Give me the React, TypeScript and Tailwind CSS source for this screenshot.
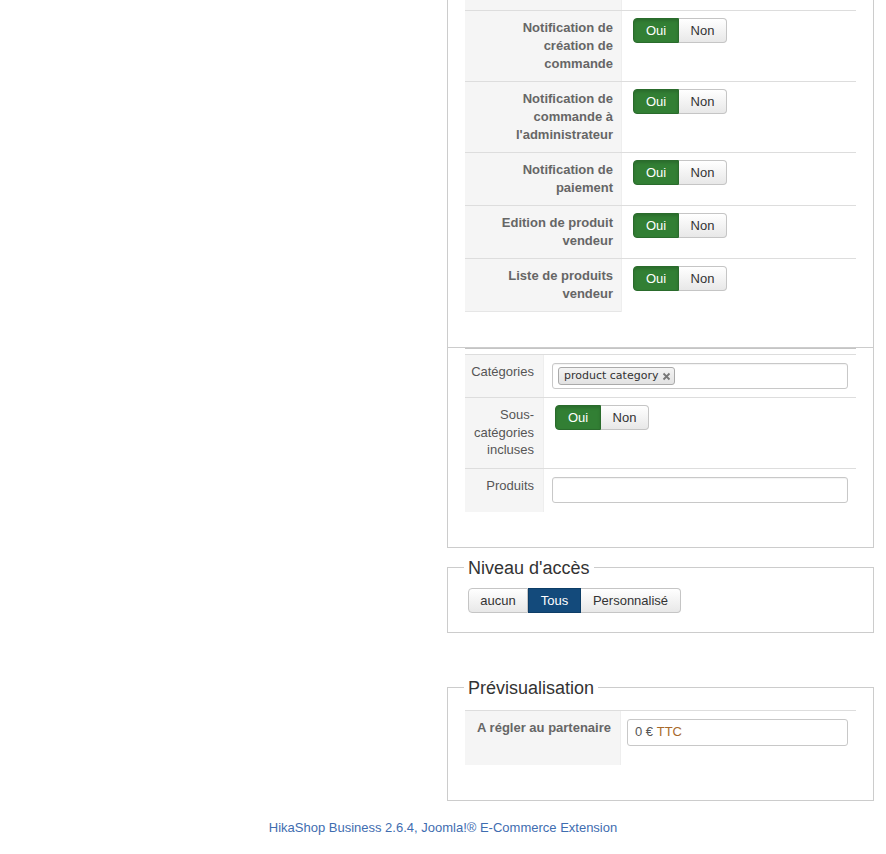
import React from "react";

type YesNoProps = { value?: boolean };

function YesNo({ value = true }: YesNoProps) {
  return (
    <div className="inline-flex h-[25px] text-[13px] leading-none">
      <span
        className={
          value
            ? "flex w-[46px] items-center justify-center rounded-l-[4px] border border-[#2a6b2c] bg-[#327f34] text-white shadow-[inset_0_2px_3px_rgba(0,0,0,0.15)]"
            : "flex w-[46px] items-center justify-center rounded-l-[4px] border border-[#c5c5c5] bg-gradient-to-b from-white to-[#e8e8e8] text-[#333]"
        }
      >
        Oui
      </span>
      <span
        className={
          value
            ? "flex w-[48px] items-center justify-center rounded-r-[4px] border border-l-0 border-[#c5c5c5] bg-gradient-to-b from-white to-[#e8e8e8] text-[#333]"
            : "flex w-[48px] items-center justify-center rounded-r-[4px] border border-l-0 border-[#8b1d1d] bg-[#a52a2a] text-white"
        }
      >
        Non
      </span>
    </div>
  );
}

const notifications = [
  { label: ["Notification de", "création de", "commande"] },
  { label: ["Notification de", "commande à", "l'administrateur"] },
  { label: ["Notification de", "paiement"] },
  { label: ["Edition de produit", "vendeur"] },
  { label: ["Liste de produits", "vendeur"] },
];

function TextInput({ children }: { children?: React.ReactNode }) {
  return (
    <div className="flex h-[26px] w-full items-center rounded-[3px] border border-[#c8c8c8] bg-white px-[6px] shadow-[inset_0_1px_1px_rgba(0,0,0,0.05)]">
      {children}
    </div>
  );
}

export default function App() {
  return (
    <div className="min-h-[854px] bg-white font-['Liberation_Sans',Arial,sans-serif] text-[13px] text-[#555]">
      <div className="flex">
        <div className="w-[447px] shrink-0" />
        <div className="w-[427px] shrink-0">
          {/* vendor notification options */}
          <fieldset className="border border-t-0 border-[#cccccc] px-[17px] pb-[35px]">
            <div className="flex h-[10px]">
              <div className="w-[156px] bg-[#f5f5f5]" />
              <div className="flex-1 border-l border-[#eeeeee]" />
            </div>
            {notifications.map((row, i) => (
              <div key={i} className="flex border-t border-[#dddddd]">
                <div
                  className={
                    "w-[156px] bg-[#f5f5f5] py-[8px] pr-[8px] text-right font-bold leading-[18px] text-[#666] " +
                    (i === notifications.length - 1 ? "border-b border-[#e6e6e6]" : "")
                  }
                >
                  {row.label.map((l) => (
                    <div key={l}>{l}</div>
                  ))}
                </div>
                <div className="flex-1 border-l border-[#eeeeee] pl-[11px] pt-[7px]">
                  <YesNo />
                </div>
              </div>
            ))}
          </fieldset>

          {/* category restrictions */}
          <fieldset className="border border-t-0 border-[#cccccc] px-[17px] pb-[35px]">
            <div className="mb-[5px] h-px bg-[#c4c4c4]" />
            <div className="flex border-t border-[#dddddd]">
              <div className="w-[78px] bg-[#f5f5f5] pb-[8px] pr-[9px] pt-[8px] text-right leading-[17px] text-[#555]">
                Catégories
              </div>
              <div className="flex-1 border-l border-[#eeeeee] py-[8px] pl-[8px] pr-[8px]">
                <TextInput>
                  <span className="-ml-[1px] flex h-[18px] items-center gap-[4px] rounded-[3px] border border-[#aaaaaa] bg-gradient-to-b from-[#f4f4f4] to-[#e2e2e2] pl-[5px] pr-[3px] font-['DejaVu_Sans',sans-serif] text-[11px] text-[#333]">
                    product category
                    <svg width="9" height="9" viewBox="0 0 9 9" className="mt-[1px]">
                      <path d="M1.5 1.5 L7.5 7.5 M7.5 1.5 L1.5 7.5" stroke="#777" strokeWidth="1.8" />
                    </svg>
                  </span>
                </TextInput>
              </div>
            </div>
            <div className="flex border-t border-[#dddddd]">
              <div className="w-[78px] bg-[#f5f5f5] pb-[9px] pr-[9px] pt-[8px] text-right leading-[17.5px] text-[#555]">
                <div>Sous-</div>
                <div>catégories</div>
                <div>incluses</div>
              </div>
              <div className="flex-1 border-l border-[#eeeeee] pl-[11px] pt-[7px]">
                <YesNo />
              </div>
            </div>
            <div className="flex border-t border-[#dddddd]">
              <div className="h-[43px] w-[78px] bg-[#f5f5f5] pr-[9px] pt-[8px] text-right leading-[17px] text-[#555]">
                Produits
              </div>
              <div className="flex-1 border-l border-[#eeeeee] py-[8px] pl-[8px] pr-[8px]">
                <TextInput />
              </div>
            </div>
          </fieldset>

          {/* access level */}
          <fieldset className="mt-[10px] border border-[#cccccc] px-[17px] pb-[19px] pt-[10px]">
            <legend className="ml-[-1px] px-[4px] text-[18px] leading-[20px] text-[#333]">Niveau d'accès</legend>
            <div className="ml-[3px] inline-flex h-[25px] text-[13px] leading-none">
              <span className="flex w-[60px] items-center justify-center rounded-l-[4px] border border-[#c5c5c5] bg-gradient-to-b from-white to-[#e8e8e8] text-[#333]">
                aucun
              </span>
              <span className="flex w-[53px] items-center justify-center border border-[#0d3d66] bg-[#134a7b] text-white">
                Tous
              </span>
              <span className="flex w-[100px] items-center justify-center rounded-r-[4px] border border-l-0 border-[#c5c5c5] bg-gradient-to-b from-white to-[#e8e8e8] text-[#333]">
                Personnalisé
              </span>
            </div>
          </fieldset>

          {/* preview */}
          <fieldset className="mt-[45px] border border-[#cccccc] px-[17px] pb-[35px] pt-[12px]">
            <legend className="ml-[-1px] px-[4px] text-[18px] leading-[20px] text-[#333]">Prévisualisation</legend>
            <div className="flex border-t border-[#dddddd]">
              <div className="h-[54px] w-[155px] bg-[#f5f5f5] pr-[9px] pt-[8px] text-right font-bold leading-[17px] text-[#666]">
                A régler au partenaire
              </div>
              <div className="flex-1 border-l border-[#eeeeee] pl-[6px] pr-[8px] pt-[8px]">
                <div className="flex h-[27px] w-full items-center rounded-[3px] border border-[#c8c8c8] bg-white px-[7px] text-[#555]">
                  0 €&nbsp;<span className="text-[#a86a2c]">TTC</span>
                </div>
              </div>
            </div>
          </fieldset>
        </div>
        <div className="w-[12px] shrink-0" />
      </div>

      <footer className="mt-[18px] text-center text-[13px] leading-[18px] text-[#3f6db0]">
        HikaShop Business 2.6.4, Joomla!® E-Commerce Extension
      </footer>
    </div>
  );
}
